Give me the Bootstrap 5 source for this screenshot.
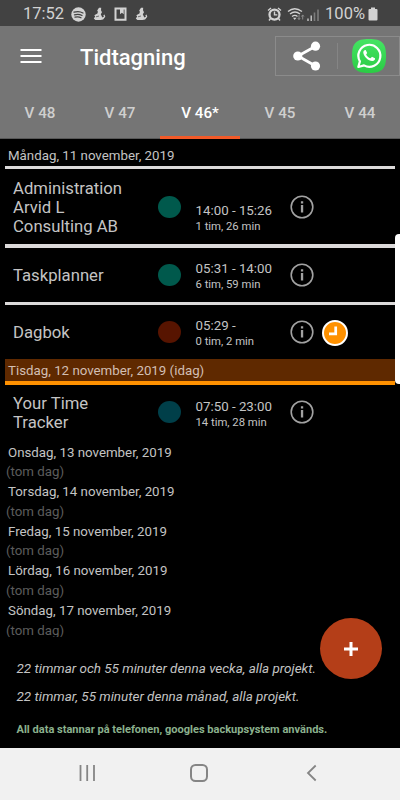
<!DOCTYPE html>
<html lang="sv">
<head>
<meta charset="utf-8">
<meta name="viewport" content="width=device-width, initial-scale=1">
<title>Tidtagning</title>
<link href="https://cdn.jsdelivr.net/npm/bootstrap@5.3.0/dist/css/bootstrap.min.css" rel="stylesheet">
<style>
body{width:400px;height:800px;background:#000;color:#c4c4c4;font-family:Roboto,sans-serif;font-size:13.3px;overflow:hidden}
svg{display:block;flex:none}
.statusbar{height:26px;background:#424242;color:#d2d2d2;font-size:16.5px;line-height:26px;padding:2px 22px 0 23px}
.topbar{height:62px;background:#757575;color:#fff;padding-left:20px}
.apptitle{font-size:22px;font-weight:500;line-height:63px;margin-left:38px}
.actions{width:125px;height:40px;margin-top:10px;border:1px solid #8b8b8b}
.actions .divider{width:1px;height:26px;background:#858585}
.tabs{height:51px;background:#757575;border-bottom:1px solid #575757}
.tabs .nav-link{padding:0;height:51px;line-height:50px;font-size:15.2px;font-weight:500;color:#cfcfcf;border-bottom:3px solid transparent}
.tabs .nav-link.active{color:#fff;border-color:#f25a29}
.week{height:498px;padding:0 5px;overflow:hidden}
.day{height:26.5px;line-height:33px;padding-left:3px}
.rule{height:3.5px;background:#dcdada}
.today{height:22px;line-height:23px;padding-left:3px;background:#5f2900;color:#d2bfb4}
.rule-now{background:#ff9100}
.entry{padding-left:8px}
.entry-name{width:145px;font-size:16.7px;line-height:19.1px;padding-top:2px}
.dot{width:23px;height:22px;border-radius:50%;flex:none}
.teal{background:#00594c}.maroon{background:#571400}.petrol{background:#003f49}
.times{width:94px;margin-left:14.5px;line-height:15.8px;padding-top:4px}
.times small{font-size:11.3px;display:block}
.empty-days{line-height:19.8px;padding-top:3px}
.empty-days dt{font-weight:400;padding-left:3px}
.empty-days dd{margin:0;color:#5c5c5c;padding-left:1px}
.totals{height:111px;padding:17.5px 16.5px 0;font-style:italic;font-size:13.45px;line-height:28.5px}
.backup{font-size:11.05px;font-weight:700;font-style:normal;color:#8bb18d;line-height:36px}
.fab{left:320px;top:618px;width:62px;height:61px;background:#b43e18;border-radius:50%}
.edge{left:395px;top:234px;width:8px;height:150px;background:#fff;border-radius:5px}
.sysnav{height:52px;background:#f1f1f1}
</style>
</head>
<body class="position-relative d-flex flex-column">
<svg width="0" height="0" class="position-absolute"><defs>
<symbol id="info" viewBox="0 0 24 24"><circle cx="12" cy="12" r="10.8" fill="none" stroke="#a2a2a2" stroke-width="1.6"/><path d="M10.900 6.200h2.300v2.200h-2.300zM10.900 10h2.300v7.600h-2.300z" fill="#a2a2a2"/></symbol>
<symbol id="nurse" viewBox="0 0 13 14"><path d="M6 .8h2.200l-.2 2.500 1 2-1.200 2 1.500 3.200 1.700-1.100-.7-1.200 1.200-.6.8 2.200-2.200 2.700-2.700.4H2.400L.8 11.500l1.400-2-.9-1.300L4.400 6.500l.5-1.700-.7-1.300z" fill="#d2d2d2"/><path d="M3 9.800l3-.8" stroke="#424242" stroke-width=".7"/></symbol>
</defs></svg>
<header>
<div class="statusbar d-flex align-items-center">
<span>17:52</span>
<svg width="15" height="15" viewBox="0 0 15 15" style="margin-left:7px"><circle cx="7.5" cy="7.5" r="7.2" fill="#d2d2d2"/><path d="M3 5.200q5-1.600 9 .8M3.500 7.800q4.300-1.200 7.500.7M4 10.200q3.500-.9 6 .5" stroke="#424242" stroke-width="1.300" fill="none" stroke-linecap="round"/></svg>
<svg width="13" height="14" style="margin-left:7px"><use href="#nurse"/></svg>
<svg width="13" height="14" viewBox="0 0 13 14" style="margin-left:8px"><path d="M1.500 1.500h10v11.300h-10z" fill="none" stroke="#d2d2d2" stroke-width="2"/><path d="M6 1h3.700v6.300L7.900 5.800 6 7.300z" fill="#d2d2d2"/></svg>
<svg width="13" height="14" style="margin-left:8px"><use href="#nurse"/></svg>
<svg class="ms-auto" width="15" height="14" viewBox="0 0 15 14"><circle cx="7.500" cy="7.600" r="5" fill="none" stroke="#d2d2d2" stroke-width="2.300"/><path d="M7.500 4.500v3.400h2.800M1 3.500L4 1M14 3.500L11 1M3.500 11.500L2 13.500M11.500 11.500L13 13.500" stroke="#d2d2d2" stroke-width="1.400" fill="none"/></svg>
<svg width="18" height="14" viewBox="0 0 18 14" style="margin-left:5px"><path d="M1 4.500q6.500-5.500 14 0M3 7q5-4 10 0M5 9.500q3-2.300 5.500 0" fill="none" stroke="#d2d2d2" stroke-width="1.300"/><path d="M6 10.800h3.500L7.700 13z" fill="#d2d2d2"/><path d="M12 8v4.500M10.800 11l1.200 1.600 1.200-1.600M15.700 12.500V8M14.500 9.500l1.200-1.600 1.200 1.600" fill="none" stroke="#8b8b8b"/></svg>
<svg width="12" height="13" viewBox="0 0 12 13" style="margin-left:2px"><path d="M1 10.500v2.500M4.200 7.500V13" stroke="#d2d2d2" stroke-width="1.300"/><path d="M7.500 4.500V13M11 1.500V13" stroke="#7c7c7c" stroke-width="1.600"/></svg>
<span style="margin-left:6px">100%</span>
<svg width="10" height="14" viewBox="0 0 10 14" style="margin-left:3px"><path d="M3 .5h4V2h1.500Q9.500 2 9.500 3v9.500q0 1-1 1h-7q-1 0-1-1V3q0-1 1-1H3z" fill="#d2d2d2"/></svg>
</div>
<div class="topbar d-flex">
<svg class="align-self-center" width="22" height="16" viewBox="0 0 22 16" style="margin-top:-2px"><path d="M.5 2h21M.5 8h21M.5 14h21" stroke="#fff" stroke-width="2"/></svg>
<h1 class="apptitle mb-0">Tidtagning</h1>
<div class="actions ms-auto d-flex align-items-center">
<svg width="28" height="30" viewBox="0 0 28 30" style="margin-left:17px"><path d="M23 5L5 15l18 10.300" fill="none" stroke="#fff" stroke-width="2.800"/><circle cx="22.500" cy="5.200" r="4.600" fill="#fff"/><circle cx="4.800" cy="15" r="4.600" fill="#fff"/><circle cx="22.500" cy="25" r="4.600" fill="#fff"/></svg>
<div class="divider" style="margin-left:16px"></div>
<svg width="36" height="36" viewBox="0 0 36 36" style="margin-left:13px"><defs><linearGradient id="wa" x2="0" y2="1"><stop stop-color="#45e463"/><stop offset="1" stop-color="#2bcb45"/></linearGradient></defs><path d="M18 1C31 1 35 5 35 18S31 35 18 35 1 31 1 18 5 1 18 1z" fill="url(#wa)"/><path d="M7.300 29l1.600-5.600A11 11 0 1 1 13 27.400z" fill="none" stroke="#fff" stroke-width="2.200" stroke-linejoin="round"/><path d="M14.800 12.200c-.6-.8-2.600.2-2.500 2.300.2 4.300 5.700 8.900 9.200 8.500 1.700-.3 3-1.500 2.500-2.800l-3-1.500-1.500 1.600c-2-.7-3.600-2.200-4.400-3.900l1.100-1.300z" fill="#fff"/></svg>
</div>
</div>
<nav class="tabs d-flex text-center">
<a class="nav-link col" href="#">V 48</a><a class="nav-link col" href="#">V 47</a><a class="nav-link col active" href="#">V 46*</a><a class="nav-link col" href="#">V 45</a><a class="nav-link col" href="#">V 44</a>
</nav>
</header>
<main class="week">
<div class="day">Måndag, 11 november, 2019</div>
<div class="rule"></div>
<div class="entry d-flex align-items-center" style="height:75px"><div class="entry-name">Administration<br>Arvid L<br>Consulting AB</div><span class="dot teal"></span><div class="times" style="padding-top:25px">14:00 - 15:26<small>1 tim, 26 min</small></div><svg width="24" height="24"><use href="#info"/></svg></div>
<div class="rule"></div>
<div class="entry d-flex align-items-center" style="height:54px"><div class="entry-name">Taskplanner</div><span class="dot teal"></span><div class="times">05:31 - 14:00<small>6 tim, 59 min</small></div><svg width="24" height="24"><use href="#info"/></svg></div>
<div class="rule"></div>
<div class="entry d-flex align-items-center" style="height:54px"><div class="entry-name">Dagbok</div><span class="dot maroon"></span><div class="times">05:29 -<small>0 tim, 2 min</small></div><svg width="24" height="24"><use href="#info"/></svg>
<svg width="26" height="26" viewBox="0 0 26 26" style="margin-left:8px;margin-top:1px"><circle cx="13" cy="13" r="12" fill="#ff9100" stroke="#fff" stroke-width="2"/><path d="M13.700 6.500v7.300H7" fill="none" stroke="#fff" stroke-width="2.700"/></svg></div>
<div class="today">Tisdag, 12 november, 2019 (idag)</div>
<div class="rule rule-now"></div>
<div class="entry d-flex align-items-center" style="height:55px"><div class="entry-name">Your Time<br>Tracker</div><span class="dot petrol"></span><div class="times" style="padding-top:6px">07:50 - 23:00<small>14 tim, 28 min</small></div><svg width="24" height="24"><use href="#info"/></svg></div>
<dl class="empty-days mb-0">
<dt>Onsdag, 13 november, 2019</dt><dd>(tom dag)</dd>
<dt>Torsdag, 14 november, 2019</dt><dd>(tom dag)</dd>
<dt>Fredag, 15 november, 2019</dt><dd>(tom dag)</dd>
<dt>Lördag, 16 november, 2019</dt><dd>(tom dag)</dd>
<dt>Söndag, 17 november, 2019</dt><dd>(tom dag)</dd>
</dl>
</main>
<section class="totals">
<div>22 timmar och 55 minuter denna vecka, alla projekt.</div>
<div>22 timmar, 55 minuter denna månad, alla projekt.</div>
<div class="backup">All data stannar på telefonen, googles backupsystem används.</div>
</section>
<footer class="sysnav d-flex align-items-center">
<svg width="18" height="18" viewBox="0 0 18 18" style="margin-left:78px;margin-top:-2px"><path d="M2.500 1v16M9.200 1v16M16 1v16" stroke="#858585" stroke-width="1.800"/></svg>
<svg width="20" height="20" viewBox="0 0 20 20" style="margin-left:93px;margin-top:-2px"><rect x="2" y="2" width="16" height="16" rx="4.500" fill="none" stroke="#858585" stroke-width="2"/></svg>
<svg width="12" height="18" viewBox="0 0 12 18" style="margin-left:97px;margin-top:-2px"><path d="M9.700 1.500L2 9l7.700 7.500" fill="none" stroke="#858585" stroke-width="1.800"/></svg>
</footer>
<button class="fab btn p-0 border-0 position-absolute d-flex align-items-center justify-content-center" aria-label="Lägg till"><svg width="16" height="16" viewBox="0 0 16 16"><path d="M8 1v14M1 8h14" stroke="#fff" stroke-width="3"/></svg></button>
<div class="edge position-absolute"></div>
<script src="https://cdn.jsdelivr.net/npm/bootstrap@5.3.0/dist/js/bootstrap.bundle.min.js"></script>
</body>
</html>
